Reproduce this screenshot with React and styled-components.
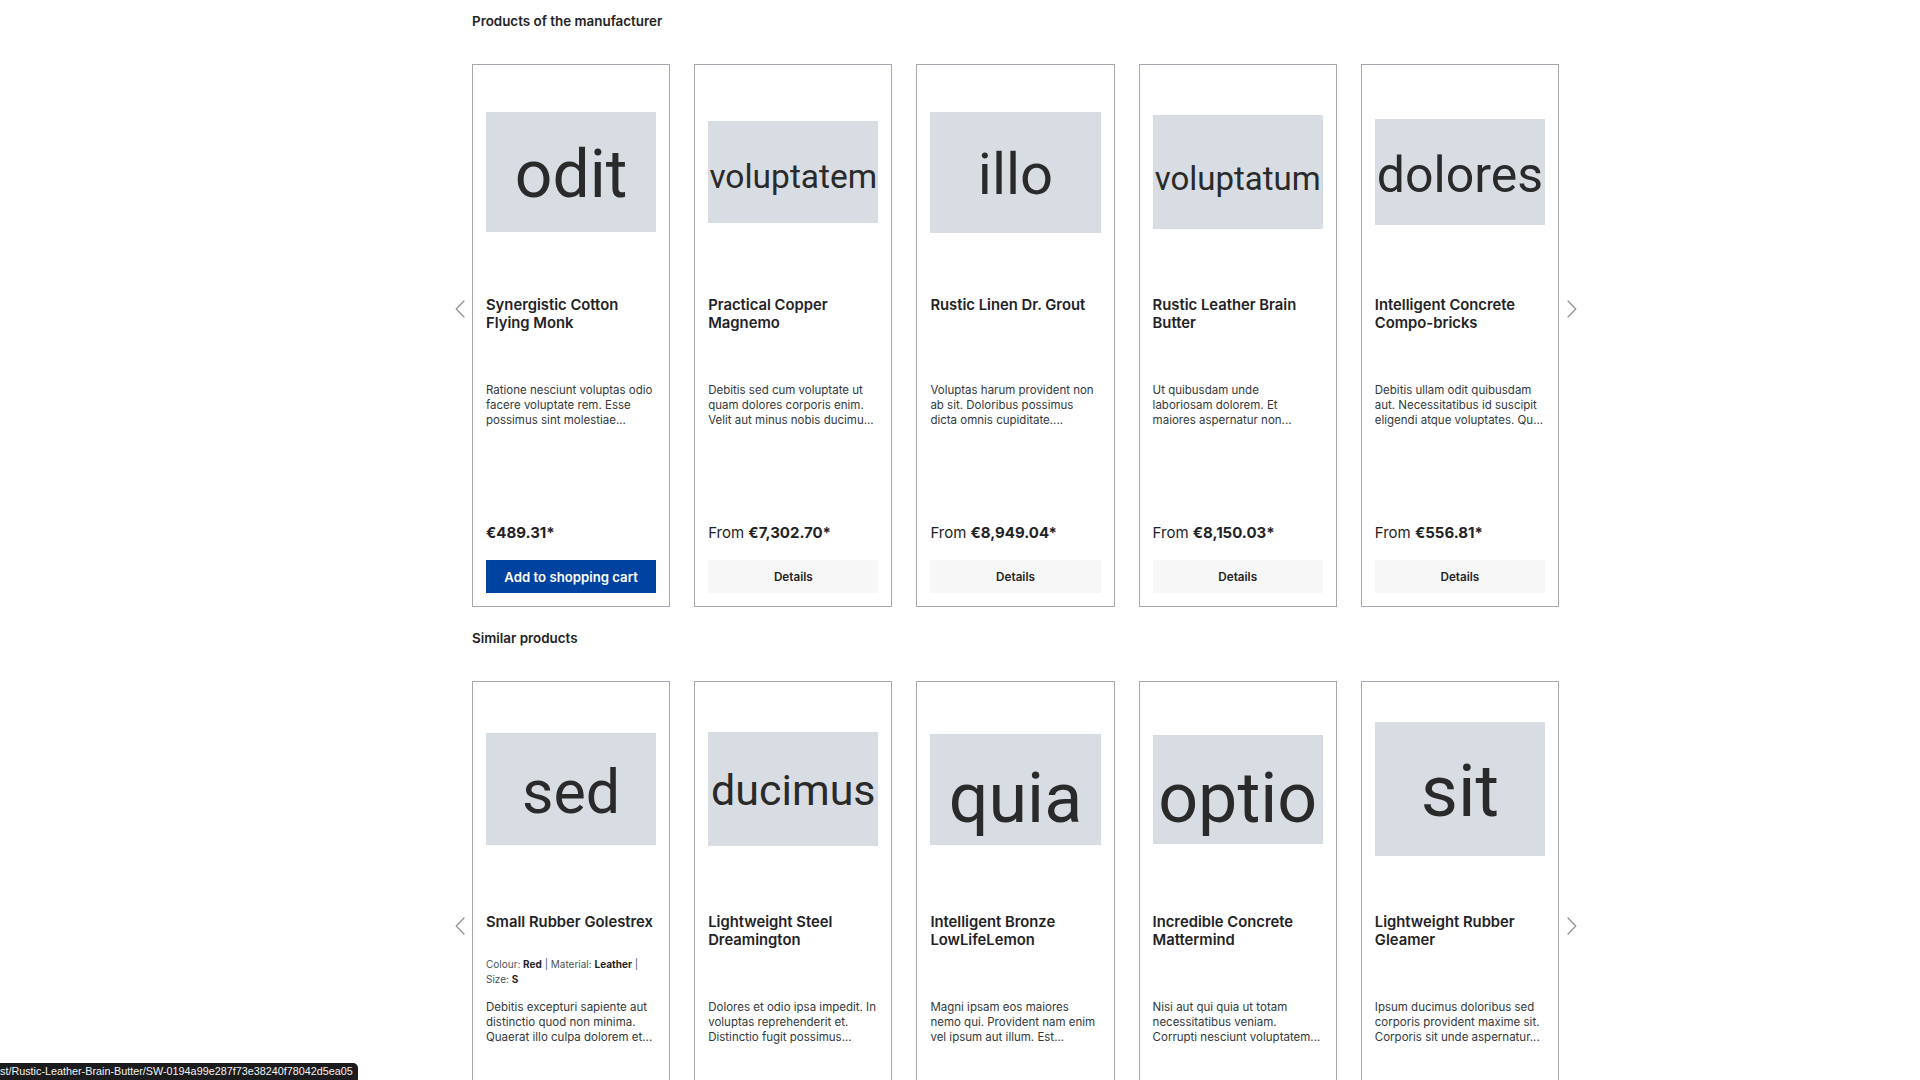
import React from "react";
import styled, { createGlobalStyle } from "styled-components";

const GlobalStyle = createGlobalStyle`
  * { box-sizing: border-box; }
  html, body { margin: 0; padding: 0; background: #fff; }
  body {
    font-family: Inter, "Noto Sans", "Liberation Sans", sans-serif;
    color: #2b2f33;
    -webkit-font-smoothing: antialiased;
  }
`;

const Page = styled.main`
  padding: 11px 0 40px 472px;
  display: flex;
  flex-direction: column;
  gap: 21px;
`;

const Section = styled.section`
  width: 1087px;
`;

const SectionTitle = styled.h2`
  margin: 0 0 33px;
  font-size: 13.4px;
  line-height: 20px;
  font-weight: 600;
  color: #1f2326;
`;

const Slider = styled.div`
  position: relative;
`;

const Track = styled.div`
  display: grid;
  grid-template-columns: repeat(5, 1fr);
  column-gap: 24px;
`;

const Arrow = styled.button`
  position: absolute;
  top: 236px;
  ${({ $side }) => ($side === "left" ? "left: -17px;" : "right: -18px;")}
  width: 10px;
  height: 18px;
  padding: 0;
  border: 0;
  background: none;
  display: flex;
  cursor: pointer;
`;

const Card = styled.article`
  height: 543px;
  border: 1px solid #a4a9b1;
  padding: 13px;
  display: flex;
  flex-direction: column;
  background: #fff;
`;

const ImageWrap = styled.div`
  height: 188px;
  display: flex;
  align-items: center;
  margin-bottom: 30px;
`;

const Placeholder = styled.div`
  width: 100%;
  height: ${({ $h }) => $h}px;
  background: #d8dce3;
  display: flex;
  align-items: center;
  justify-content: center;
  overflow: hidden;
  font-family: Roboto, "Liberation Sans", sans-serif;
  font-size: ${({ $fs }) => $fs}px;
  line-height: 1;
  color: #2a2a2a;
  white-space: nowrap;
`;

const PlaceholderWord = styled.span`
  display: block;
  transform: translateY(${({ $dy }) => $dy}px);
`;

const Name = styled.div`
  height: 36px;
  margin-bottom: 8px;
  font-size: 14.8px;
  line-height: 18px;
  font-weight: 600;
  color: #1f2326;
  white-space: nowrap;
`;

const Variants = styled.div`
  height: 30px;
  margin-bottom: 13px;
  font-size: 10px;
  line-height: 15px;
  color: #4a545b;
  white-space: nowrap;

  b {
    font-weight: 700;
    color: #1f2326;
  }
`;

const Description = styled.p`
  margin: 0;
  font-size: 11.5px;
  line-height: 15px;
  color: #33383c;
  white-space: nowrap;
`;

const Footer = styled.div`
  margin-top: auto;
  display: flex;
  flex-direction: column;
  gap: 16px;
`;

const Price = styled.div`
  font-size: 15px;
  line-height: 22px;
  color: #1f2326;

  strong {
    font-weight: 700;
  }
`;

const ActionButton = styled.button`
  height: 33px;
  width: 100%;
  border: 0;
  border-radius: 0;
  font-family: inherit;
  font-size: ${({ $primary }) => ($primary ? "13.2px" : "11.7px")};
  font-weight: 600;
  background: ${({ $primary }) => ($primary ? "#0042a0" : "#f7f7f7")};
  color: ${({ $primary }) => ($primary ? "#fff" : "#1f2326")};
  cursor: pointer;
`;

const StatusBar = styled.div`
  position: fixed;
  left: 0;
  bottom: 0;
  height: 17px;
  padding: 0 5px 0 0;
  background: #1c1c1e;
  color: #f2f2f2;
  border-top-right-radius: 5px;
  font-family: "Liberation Sans", Arial, sans-serif;
  font-size: 10.8px;
  line-height: 17px;
  white-space: nowrap;
`;

const Chevron = ({ dir }) => (
  <svg width="10" height="18" viewBox="0 0 10 18" fill="none">
    <path
      d={dir === "left" ? "M9 1 L1.2 9 L9 17" : "M1 1 L8.8 9 L1 17"}
      stroke="#8d9197"
      strokeWidth="1.2"
      strokeLinecap="round"
      strokeLinejoin="round"
    />
  </svg>
);

const manufacturerProducts = [
  {
    word: "odit", h: 120, fs: 66, dy: 3,
    name: ["Synergistic Cotton", "Flying Monk"],
    desc: ["Ratione nesciunt voluptas odio", "facere voluptate rem. Esse", "possimus sint molestiae..."],
    price: "€489.31*", from: false, buy: true,
  },
  {
    word: "voluptatem", h: 102, fs: 33.5, dy: 5,
    name: ["Practical Copper", "Magnemo"],
    desc: ["Debitis sed cum voluptate ut", "quam dolores corporis enim.", "Velit aut minus nobis ducimu..."],
    price: "€7,302.70*", from: true,
  },
  {
    word: "illo", h: 121, fs: 58, dy: 2,
    name: ["Rustic Linen Dr. Grout"],
    desc: ["Voluptas harum provident non", "ab sit. Doloribus possimus", "dicta omnis cupiditate...."],
    price: "€8,949.04*", from: true,
  },
  {
    word: "voluptatum", h: 114, fs: 33, dy: 6,
    name: ["Rustic Leather Brain", "Butter"],
    desc: ["Ut quibusdam unde", "laboriosam dolorem. Et", "maiores aspernatur non..."],
    price: "€8,150.03*", from: true,
  },
  {
    word: "dolores", h: 106, fs: 50, dy: 3,
    name: ["Intelligent Concrete", "Compo-bricks"],
    desc: ["Debitis ullam odit quibusdam", "aut. Necessitatibus id suscipit", "eligendi atque voluptates. Qu..."],
    price: "€556.81*", from: true,
  },
];

const similarProducts = [
  {
    word: "sed", h: 112, fs: 61, dy: 3,
    name: ["Small Rubber Golestrex"],
    variants: true,
    desc: ["Debitis excepturi sapiente aut", "distinctio quod non minima.", "Quaerat illo culpa dolorem et..."],
    price: "€612.48*", from: true,
  },
  {
    word: "ducimus", h: 114, fs: 43, dy: 1,
    name: ["Lightweight Steel", "Dreamington"],
    desc: ["Dolores et odio ipsa impedit. In", "voluptas reprehenderit et.", "Distinctio fugit possimus..."],
    price: "€3,418.90*", from: true,
  },
  {
    word: "quia", h: 111, fs: 70, dy: 9,
    name: ["Intelligent Bronze", "LowLifeLemon"],
    desc: ["Magni ipsam eos maiores", "nemo qui. Provident nam enim", "vel ipsum aut illum. Est..."],
    price: "€1,275.33*", from: true,
  },
  {
    word: "optio", h: 109, fs: 70, dy: 9,
    name: ["Incredible Concrete", "Mattermind"],
    desc: ["Nisi aut qui quia ut totam", "necessitatibus veniam.", "Corrupti nesciunt voluptatem..."],
    price: "€5,064.12*", from: true,
  },
  {
    word: "sit", h: 134, fs: 72, dy: 3,
    name: ["Lightweight Rubber", "Gleamer"],
    desc: ["Ipsum ducimus doloribus sed", "corporis provident maxime sit.", "Corporis sit unde aspernatur..."],
    price: "€942.67*", from: true,
  },
];

const Lines = ({ lines }) =>
  lines.map((line, i) => (
    <React.Fragment key={i}>
      {i > 0 && <br />}
      {line}
    </React.Fragment>
  ));

const ProductCard = ({ p }) => (
  <Card>
    <ImageWrap>
      <Placeholder $h={p.h} $fs={p.fs}>
        <PlaceholderWord $dy={p.dy}>{p.word}</PlaceholderWord>
      </Placeholder>
    </ImageWrap>
    <Name>
      <Lines lines={p.name} />
    </Name>
    <Variants>
      {p.variants && (
        <>
          Colour: <b>Red</b> | Material: <b>Leather</b> |<br />
          Size: <b>S</b>
        </>
      )}
    </Variants>
    <Description>
      <Lines lines={p.desc} />
    </Description>
    <Footer>
      <Price>
        {p.from && "From "}
        <strong>{p.price}</strong>
      </Price>
      {p.buy ? (
        <ActionButton $primary>Add to shopping cart</ActionButton>
      ) : (
        <ActionButton>Details</ActionButton>
      )}
    </Footer>
  </Card>
);

const ProductSlider = ({ title, products }) => (
  <Section>
    <SectionTitle>{title}</SectionTitle>
    <Slider>
      <Arrow $side="left" aria-label="Previous">
        <Chevron dir="left" />
      </Arrow>
      <Track>
        {products.map((p) => (
          <ProductCard key={p.word + p.price} p={p} />
        ))}
      </Track>
      <Arrow $side="right" aria-label="Next">
        <Chevron dir="right" />
      </Arrow>
    </Slider>
  </Section>
);

export default function App() {
  return (
    <>
      <GlobalStyle />
      <Page>
        <ProductSlider title="Products of the manufacturer" products={manufacturerProducts} />
        <ProductSlider title="Similar products" products={similarProducts} />
      </Page>
      <StatusBar>st/Rustic-Leather-Brain-Butter/SW-0194a99e287f73e38240f78042d5ea05</StatusBar>
    </>
  );
}
